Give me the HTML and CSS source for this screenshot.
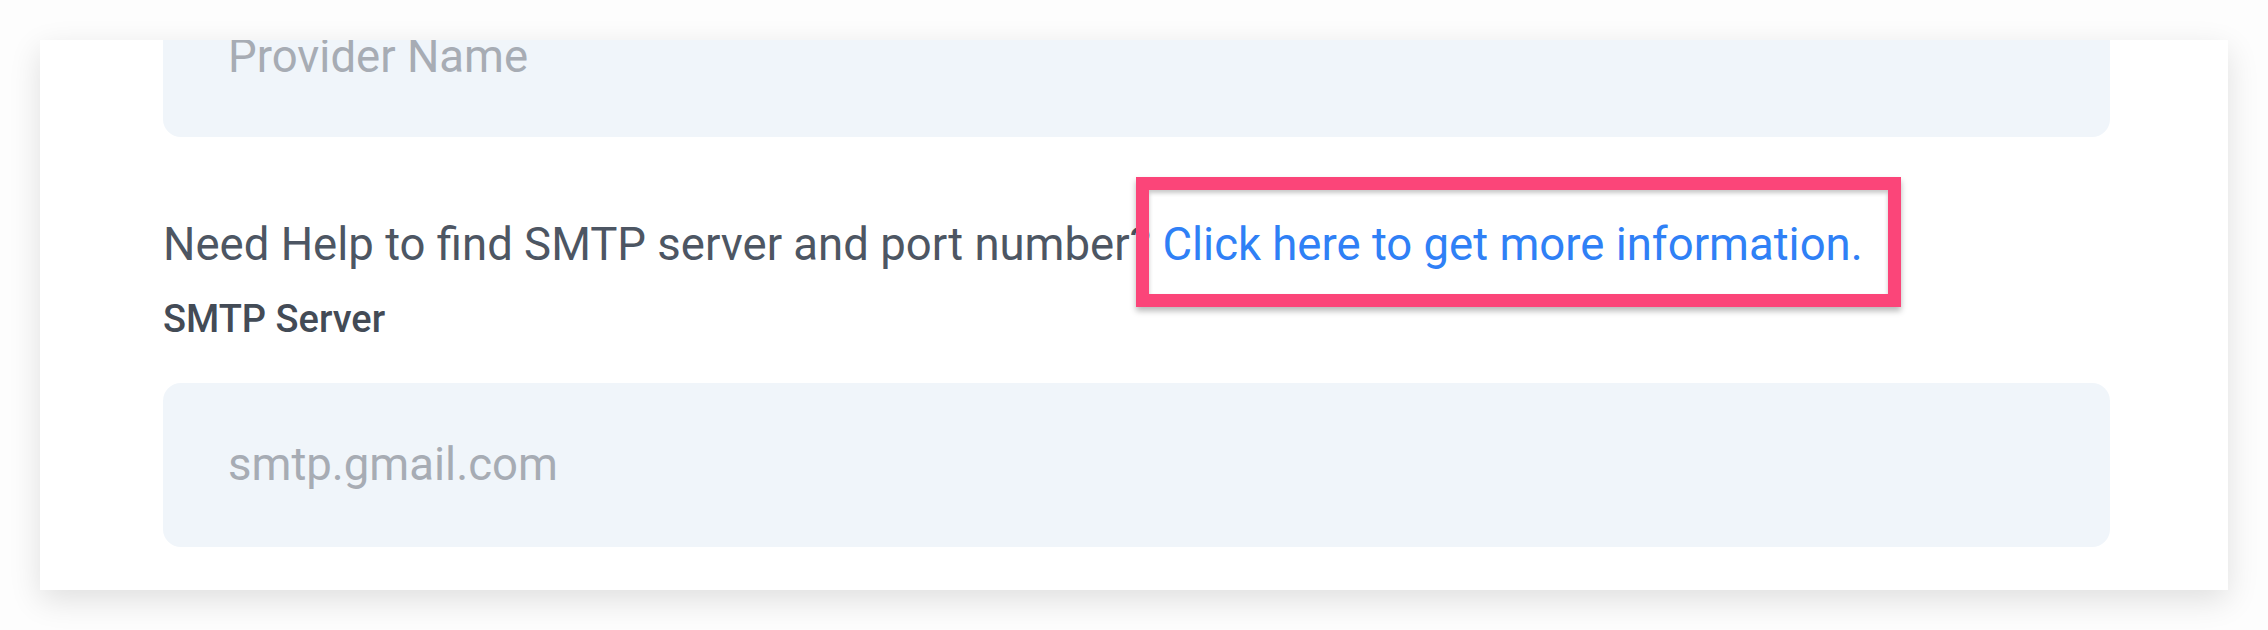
FILE: index.html
```html
<!DOCTYPE html>
<html lang="en">
<head>
<meta charset="utf-8">
<title>SMTP settings</title>
<link rel="stylesheet" href="styles.css">
</head>
<body>
<div class="page">
  <div class="card">
    <div class="field field-top"><span class="placeholder">Provider Name</span></div>
    <p class="help">Need Help to find SMTP server and port number? <a class="help-link" href="#">Click here to get more information.</a></p>
    <div class="label">SMTP Server</div>
    <div class="field"><span class="placeholder">smtp.gmail.com</span></div>
  </div>
</div>
</body>
</html>
```

FILE: styles.css
```css
html, body {
  margin: 0;
  padding: 0;
  background: #fdfdfd;
}
body {
  font-family: Roboto, "Liberation Sans", Arial, sans-serif;
}
.page {
  padding: 40px 40px 40px 40px;
}
.card {
  background: #ffffff;
  height: 550px;
  box-sizing: border-box;
  padding: 0 118px 43px 123px;
  overflow: hidden;
  box-shadow: 0 10px 30px rgba(0, 0, 0, 0.12);
  display: flex;
  flex-direction: column;
}
.field {
  flex: none;
  height: 164px;
  box-sizing: border-box;
  border-radius: 18px;
  background: #f0f5fa;
  display: flex;
  align-items: center;
  padding-left: 65px;
}
.field-top {
  margin-top: -67px;
  padding-top: 4px;
}
.placeholder {
  font-size: 45.5px;
  line-height: 46px;
  color: #a7acb4;
}
.help {
  margin: 74px 0 0 0;
  font-size: 45.5px;
  line-height: 68px;
  color: #4d5663;
  white-space: nowrap;
}
.help-link {
  position: relative;
  color: #2f80f6;
  text-decoration: none;
}
.help-link::after {
  content: "";
  position: absolute;
  top: -41px;
  bottom: -36px;
  left: -26px;
  right: -38px;
  border: 13px solid #fb4579;
  box-shadow: 0 4px 6px rgba(0, 0, 0, 0.28), inset 0 3px 4px rgba(0, 0, 0, 0.22);
}
.label {
  margin-top: 18px;
  font-size: 38px;
  line-height: 44px;
  font-weight: 500;
  color: #434b56;
}
.label + .field {
  margin-top: 42px;
}
```
